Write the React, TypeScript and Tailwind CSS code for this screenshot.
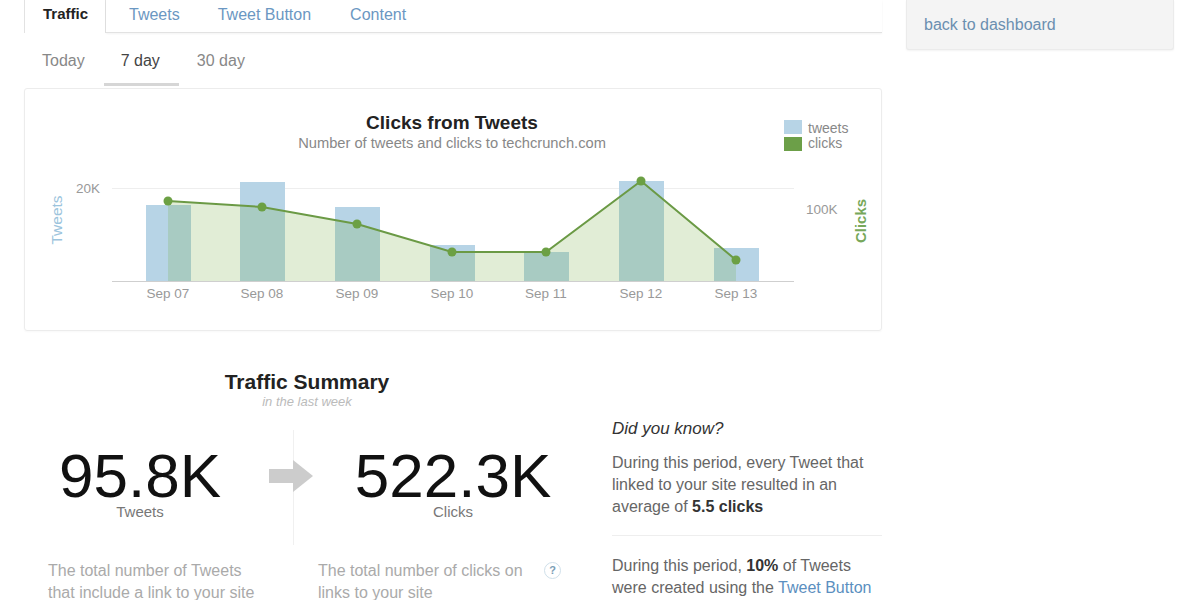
import React from 'react';

const days = ['Sep 07', 'Sep 08', 'Sep 09', 'Sep 10', 'Sep 11', 'Sep 12', 'Sep 13'];
const xs = [168, 262, 357, 452, 546, 641, 736];
// bar tops (tweets) and line points (clicks), in page pixels
const barTop = [205, 182, 207, 245, 252, 181, 248];
const clickY = [201, 207, 224, 252, 252, 181, 260];
const BASE = 281;

function ClicksChart() {
  const line = xs.map((x, i) => `${x},${clickY[i]}`).join(' ');
  const area = `${xs[0]},${BASE} ${line} ${xs[6]},${BASE}`;
  return (
    <svg width="857" height="243" viewBox="24 88 857 243" className="block">
      {/* title */}
      <text x="452" y="129" textAnchor="middle" fontSize="19" fontWeight="bold" fill="#222">Clicks from Tweets</text>
      <text x="452" y="148" textAnchor="middle" fontSize="14.7" fill="#888">Number of tweets and clicks to techcrunch.com</text>

      {/* legend */}
      <rect x="784" y="120" width="18" height="14" fill="#b7d4e6" />
      <rect x="784" y="137" width="18" height="14" fill="#6c9f48" />
      <text x="808" y="133" fontSize="14" fill="#888">tweets</text>
      <text x="808" y="148" fontSize="14" fill="#888">clicks</text>

      {/* axes */}
      <line x1="112" y1="188.5" x2="794" y2="188.5" stroke="#eeeeee" />
      <text x="100" y="193" textAnchor="end" fontSize="13.5" fill="#999">20K</text>
      <text x="806" y="214" fontSize="13.5" fill="#999">100K</text>
      <text x="0" y="0" transform="translate(62 220) rotate(-90)" textAnchor="middle" fontSize="15.5" fill="#9cc4dd">Tweets</text>
      <text x="0" y="0" transform="translate(866 221) rotate(-90)" textAnchor="middle" fontSize="15" fontWeight="bold" fill="#77a85a">Clicks</text>

      {/* bars */}
      {xs.map((x, i) => (
        <rect key={i} x={x - 22} y={barTop[i]} width="45" height={BASE - barTop[i]} fill="#b7d4e6" />
      ))}

      {/* clicks area + line */}
      <polygon points={area} fill="rgb(120,175,70)" fillOpacity="0.22" />
      <polyline points={line} fill="none" stroke="#6b9a45" strokeWidth="2" />
      {xs.map((x, i) => (
        <circle key={i} cx={x} cy={clickY[i]} r="4.5" fill="#6ca044" />
      ))}

      <line x1="112" y1="281.5" x2="794" y2="281.5" stroke="#cfcfcf" />
      {xs.map((x, i) => (
        <text key={i} x={x} y="298" textAnchor="middle" fontSize="13.5" fill="#999">{days[i]}</text>
      ))}
    </svg>
  );
}

function Arrow() {
  return (
    <svg width="44" height="32" viewBox="0 0 44 32">
      <path d="M0 9 H24 V0 L44 16 L24 32 V23 H0 Z" fill="#cccccc" />
    </svg>
  );
}

export default function App() {
  return (
    <div className="w-[1200px] h-[600px] overflow-hidden bg-white flex font-['Liberation_Sans',Arial,sans-serif]">
      <main className="ml-[24px] w-[858px] flex-shrink-0">
        {/* Tabs */}
        <div className="flex h-[33px]">
          <div className="border-x border-[#e2e2e2] pl-[18px] pr-[17px] pt-[3px] text-[15px] font-bold text-[#222] bg-white">
            Traffic
          </div>
          <div className="flex-1 flex border-b border-[#e2e2e2] shadow-[0_1px_2px_rgba(0,0,0,0.05)] text-[16px] text-[#6b97c2] pt-[3px]">
            <span className="pl-[23px] pr-[19px]">Tweets</span>
            <span className="pl-[19px] pr-[20px]">Tweet Button</span>
            <span className="px-[19px]">Content</span>
          </div>
        </div>

        {/* Range */}
        <div className="flex h-[55px] text-[16px] text-[#888]">
          <div className="h-[53px] pt-[6px] flex items-center pl-[18px] pr-[19px] border-b-[3px] border-transparent">Today</div>
          <div className="h-[53px] pt-[6px] flex items-center pl-[17px] pr-[19px] border-b-[3px] border-[#d6d6d6] text-[#444]">7 day</div>
          <div className="h-[53px] pt-[6px] flex items-center px-[18px] border-b-[3px] border-transparent">30 day</div>
        </div>

        {/* Chart */}
        <div className="border border-[#ececec] rounded-[3px] h-[243px] overflow-hidden shadow-[0_1px_2px_rgba(0,0,0,0.03)]">
          <div className="-m-px">
            <ClicksChart />
          </div>
        </div>

        {/* Summary */}
        <div className="flex">
          <div className="w-[566px] pt-[39px]">
            <h2 className="text-center text-[21px] leading-[24px] font-bold text-[#222]">Traffic Summary</h2>
            <p className="text-center text-[13px] leading-[16px] italic text-[#bbb]">in the last week</p>

            <div className="flex mt-[20px]">
              <div className="w-[232px] pt-[15px] text-center">
                <div className="text-[62px] leading-[61px] text-[#111]">95.8K</div>
                <div className="text-[15px] leading-[12px] text-[#777]">Tweets</div>
              </div>
              <div className="w-[37px]" />
              <div className="relative w-[297px] pt-[15px] pb-[27px] border-l border-[#f0f0f0] text-center">
                <div className="absolute left-[-25px] top-[30px]">
                  <Arrow />
                </div>
                <div className="pl-[22px]">
                  <div className="text-[62px] leading-[61px] text-[#111]">522.3K</div>
                  <div className="text-[15px] leading-[12px] text-[#777]">Clicks</div>
                </div>
              </div>
            </div>

            <div className="flex mt-[15px] text-[16px] leading-[22px] text-[#aaa]">
              <p className="w-[269px] pl-[24px]">
                The total number of Tweets<br />that include a link to your site
              </p>
              <div className="flex pl-[25px]">
                <p className="w-[226px]">
                  The total number of clicks on<br />links to your site
                </p>
                <span className="mt-[2px] w-[17px] h-[17px] rounded-full border border-[#cfe0ea] text-[11px] leading-[15px] text-center text-[#7a9db5] font-bold">
                  ?
                </span>
              </div>
            </div>
          </div>

          <aside className="ml-[22px] w-[270px] pt-[87px] text-[16px] leading-[22px] text-[#666]">
            <p className="italic text-[17px] text-[#333]">Did you know?</p>
            <p className="mt-[12px] pb-[17px] border-b border-[#eeeeee]">
              During this period, every Tweet that linked to your site resulted in an average of{' '}
              <b className="text-[#333]">5.5 clicks</b>
            </p>
            <p className="pt-[19px]">
              During this period, <b className="text-[#333]">10%</b> of Tweets were created using the{' '}
              <span className="text-[#5b8fc0]">Tweet Button</span>
            </p>
          </aside>
        </div>
      </main>

      {/* Sidebar */}
      <div className="ml-[24px] w-[268px]">
        <div className="h-[50px] bg-[#f4f4f4] border border-t-0 border-[#ebebeb] rounded-b-[3px] shadow-[0_1px_2px_rgba(0,0,0,0.05)] pl-[17px] pt-[15px] text-[16px] leading-[20px] text-[#6b8fb0]">
          back to dashboard
        </div>
      </div>
    </div>
  );
}
